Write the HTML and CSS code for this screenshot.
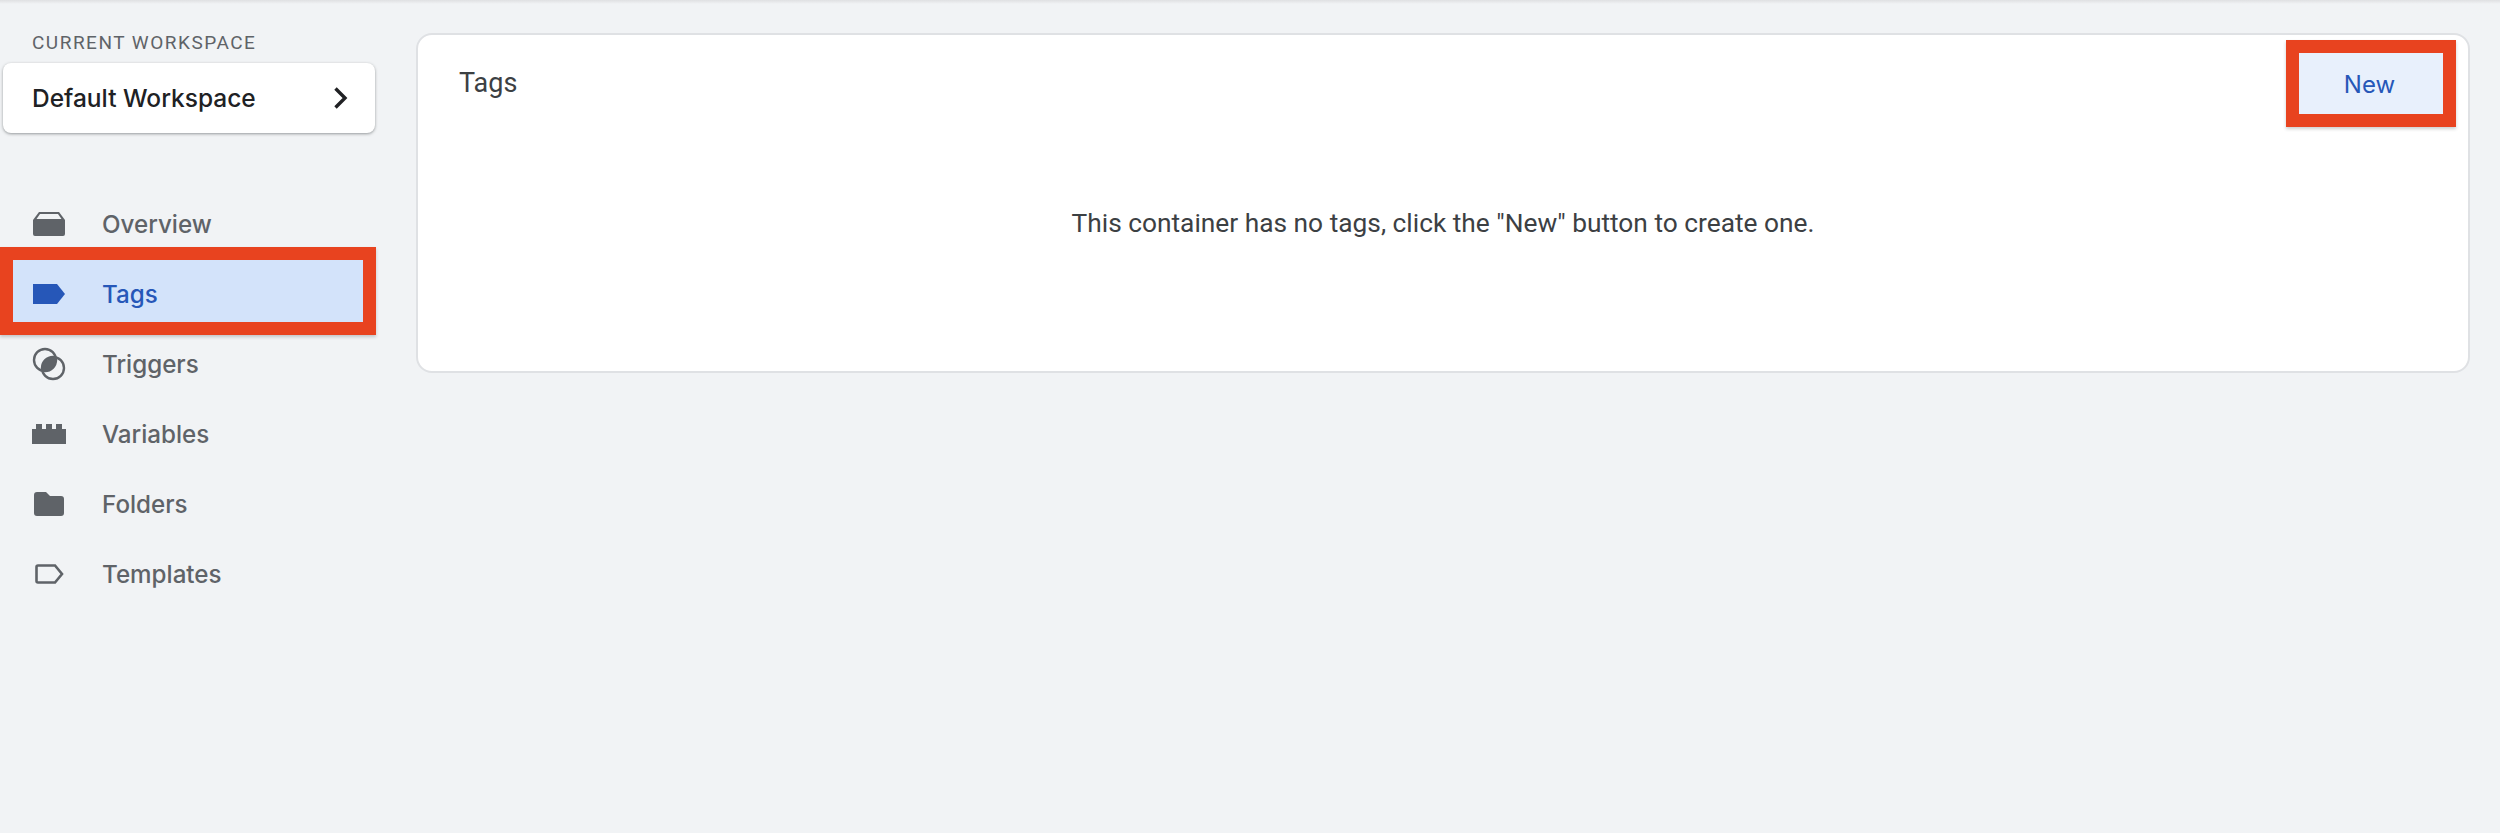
FILE: index.html
```html
<!DOCTYPE html>
<html lang="en">

<head>
    <meta charset="UTF-8">
    <title>Tags</title>
    <link rel="stylesheet" href="styles.css">
</head>

<body>
    <div class="top-shadow"></div>
    <div class="page">
        <aside class="sidebar">
            <div class="workspace-label">CURRENT WORKSPACE</div>
            <div class="workspace-card">
                <span>Default Workspace</span>
                <svg class="chevron" viewBox="0 0 16 24" width="16" height="24">
                    <path d="M2.500 2.500L12 12l-9.500 9.500" fill="none" stroke="#202124" stroke-width="3.400" />
                </svg>
            </div>
            <nav class="nav">
                <div class="nav-item">
                    <svg class="nav-icon" viewBox="0 0 34 26">
                        <path d="M7 1h20l6 8v14a2 2 0 0 1-2 2H3a2 2 0 0 1-2-2V9z M8 3L4.500 8h25L26 3z" fill="#5f6368" fill-rule="evenodd" />
                    </svg>
                    <span>Overview</span>
                </div>
                <div class="nav-item active">
                    <svg class="nav-icon" viewBox="0 0 34 20">
                        <path d="M1 0h24l8 10-8 10H1z" fill="#2657b8" />
                    </svg>
                    <span>Tags</span>
                </div>
                <div class="nav-item">
                    <svg class="nav-icon" viewBox="0 0 34 34">
                        <circle cx="13" cy="13" r="11" fill="none" stroke="#5f6368" stroke-width="2.400" />
                        <circle cx="21" cy="21" r="11" fill="none" stroke="#5f6368" stroke-width="2.400" />
                        <path d="M21 10a11 11 0 0 0-11 11q0 1.500.4 2.700a11 11 0 0 0 13.300-13.300q-1.300-.4-2.700-.4z" fill="#5f6368" />
                    </svg>
                    <span>Triggers</span>
                </div>
                <div class="nav-item">
                    <svg class="nav-icon" viewBox="0 0 34 20">
                        <path d="M0 5h4V0h6v5h4V0h6v5h4V0h6v5h4v15H0z" fill="#5f6368" />
                    </svg>
                    <span>Variables</span>
                </div>
                <div class="nav-item">
                    <svg class="nav-icon" viewBox="0 0 34 24">
                        <path d="M5 0h9l4 4h11a3 3 0 0 1 3 3v14a3 3 0 0 1-3 3H5a3 3 0 0 1-3-3V3a3 3 0 0 1 3-3z" fill="#5f6368" />
                    </svg>
                    <span>Folders</span>
                </div>
                <div class="nav-item">
                    <svg class="nav-icon" viewBox="0 0 34 20">
                        <path d="M6 1.500h17l7 8.500-7 8.500H6a1.500 1.500 0 0 1-1.500-1.500V3A1.500 1.500 0 0 1 6 1.500z" fill="none" stroke="#5f6368" stroke-width="2.600" />
                    </svg>
                    <span>Templates</span>
                </div>
            </nav>
        </aside>
        <main class="card">
            <div class="card-head">
                <h2 class="card-title">Tags</h2>
                <button class="new-button">New</button>
            </div>
            <p class="empty-text">This container has no tags, click the "New" button to create one.</p>
        </main>
    </div>
</body>

</html>
```
FILE: styles.css
```css
body {
    margin: 0;
    background: #f1f3f5;
    font-family: Roboto, 'Liberation Sans', sans-serif;
    overflow: hidden;
}

.top-shadow {
    height: 4px;
    background: linear-gradient(to bottom, #dfe0e2, #f1f3f5);
}

.page {
    display: flex;
    align-items: flex-start;
}

.sidebar {
    width: 376px;
    flex-shrink: 0;
}

.workspace-label {
    margin: 29px 0 0 32px;
    font-size: 19px;
    line-height: 20px;
    letter-spacing: 1.500px;
    color: #5f6368;
}

.workspace-card {
    display: flex;
    align-items: center;
    justify-content: space-between;
    box-sizing: border-box;
    width: 372px;
    height: 70px;
    margin: 10px 0 0 3px;
    padding: 0 26px 0 29px;
    background: #fff;
    border-radius: 8px;
    box-shadow: 0 1px 3px rgba(60, 64, 67, 0.5);
    font-family: Inter, Roboto, sans-serif;
    font-size: 24.500px;
    font-weight: 500;
    color: #202124;
}

.nav {
    margin-top: 56px;
}

.nav-item {
    display: flex;
    align-items: center;
    height: 70px;
    padding-left: 32px;
    font-family: Inter, Roboto, sans-serif;
    font-size: 24.200px;
    font-weight: 450;
    color: #5f6368;
}

.nav-icon {
    width: 34px;
    height: 34px;
    margin-right: 36px;
    flex-shrink: 0;
}

/* box sits a little above its row, as the marker was drawn by hand */
.nav-item.active {
    box-sizing: border-box;
    height: 88px;
    margin: -12px 0 -6px;
    padding: 6px 0 0 19px;
    border: 13px solid #e8431f;
    background: #d3e3fa;
    color: #2657b8;
    box-shadow: 0 2px 3px rgba(60, 64, 67, 0.25);
}

.card {
    box-sizing: border-box;
    width: 2054px;
    height: 340px;
    margin: 29px 0 0 40px;
    background: #fff;
    border: 2px solid #dfe1e4;
    border-radius: 16px;
}

.card-head {
    display: flex;
    justify-content: space-between;
    align-items: flex-start;
    padding: 5px 12px 0 41px;
}

.card-title {
    margin: 23px 0 0;
    font-size: 27px;
    line-height: 40px;
    font-weight: 400;
    color: #3c4043;
}

.new-button {
    box-sizing: border-box;
    width: 170px;
    height: 87px;
    border: 13px solid #e8431f;
    background: #e8f0fc;
    color: #2657b8;
    font-family: Inter, Roboto, sans-serif;
    font-size: 24px;
    padding: 2px 3px 0 0;
    box-shadow: 0 2px 3px rgba(60, 64, 67, 0.25);
}

.empty-text {
    margin: 78px 0 0;
    text-align: center;
    font-size: 26.300px;
    line-height: 36px;
    color: #3c4043;
}
```
